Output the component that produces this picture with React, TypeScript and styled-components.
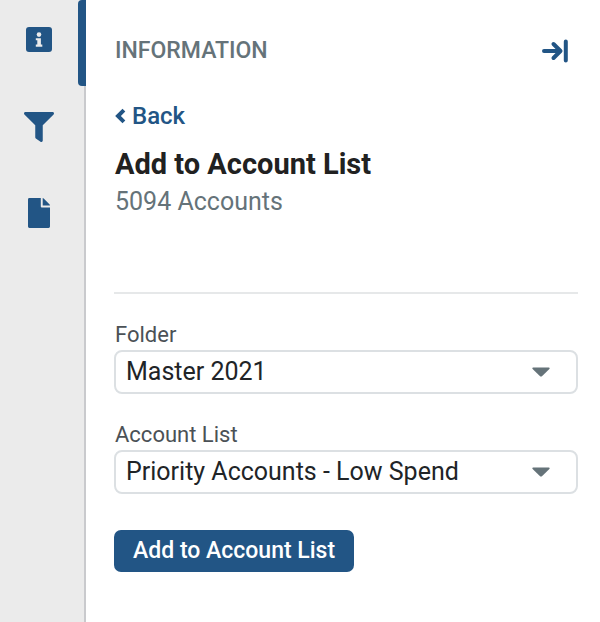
import React, { useState } from "react";
import styled, { createGlobalStyle } from "styled-components";

const blue = "#225585";
const slate = "#657379";

const GlobalStyle = createGlobalStyle`
  *, *::before, *::after { box-sizing: border-box; }
  body {
    margin: 0;
    background: #fff;
    color: #212427;
    font-family: Roboto, "Liberation Sans", sans-serif;
  }
  button, select { font: inherit; }
`;

const Page = styled.div`
  display: flex;
  min-height: 100vh;
`;

const Sidebar = styled.nav`
  display: flex;
  flex: 0 0 86px;
  flex-direction: column;
  gap: 6px;
  background: #ebebeb;
  border-right: 2px solid #c9cacd;
`;

const TabButton = styled.button<{ $active: boolean }>`
  position: relative;
  display: flex;
  align-items: center;
  justify-content: center;
  height: 80px;
  padding: 2px 6px 0 0;
  border: 0;
  background: none;
  color: ${blue};
  cursor: pointer;

  &::after {
    content: "";
    display: ${({ $active }) => ($active ? "block" : "none")};
    position: absolute;
    top: 0;
    right: -2px;
    width: 8px;
    height: 86px;
    border-radius: 4px 0 0 4px;
    background: ${blue};
  }
`;

const Panel = styled.main`
  flex: 1;
  min-width: 0;
  padding: 35px 22px 34px 28px;
`;

const PanelHeader = styled.header`
  display: flex;
  align-items: center;
  justify-content: space-between;
  height: 32px;
  padding: 0 10px 0 1px;
`;

const PanelTitle = styled.h2`
  margin: 0;
  color: ${slate};
  font-size: 23px;
  font-weight: 500;
  line-height: 32px;
`;

const CollapseButton = styled.button`
  display: flex;
  padding: 0;
  border: 0;
  background: none;
  color: ${blue};
  cursor: pointer;
`;

const BackLink = styled.a`
  display: inline-flex;
  align-items: center;
  gap: 6px;
  margin: 33px 0 0 1px;
  color: ${blue};
  font-size: 24px;
  font-weight: 500;
  line-height: 32px;
  text-decoration: none;
`;

const Summary = styled.section`
  height: 162px;
  padding: 14px 1px 0;
  border-bottom: 2px solid #e6e8e9;
`;

const Heading = styled.h1`
  margin: 0;
  color: #212121;
  font-size: 29px;
  font-weight: 700;
  line-height: 36px;
`;

const Count = styled.p`
  margin: 2px 0 0;
  color: ${slate};
  font-size: 25px;
  line-height: 36px;
`;

const Form = styled.form`
  display: flex;
  flex-direction: column;
  gap: 28px;
  padding-top: 27px;
`;

const Field = styled.div`
  display: flex;
  flex-direction: column;
  gap: 1px;

  & + & { margin-top: -1px; }
`;

const Label = styled.label`
  padding-left: 1px;
  color: #4b5156;
  font-size: 22px;
  line-height: 28px;
`;

const SelectFrame = styled.div`
  display: grid;
  align-items: center;

  > * { grid-area: 1 / 1; }
`;

const Select = styled.select`
  width: 100%;
  height: 44px;
  padding: 0 60px 2px 10px;
  border: 2px solid #dce0e3;
  border-radius: 8px;
  background: #fff;
  color: #212427;
  font-size: 25px;
  appearance: none;
`;

const Caret = styled.svg`
  justify-self: end;
  margin-right: 28px;
  pointer-events: none;
`;

const SubmitButton = styled.button`
  align-self: flex-start;
  height: 42px;
  margin-top: 8px;
  padding: 0 19px 2px;
  border: 0;
  border-radius: 7px;
  background: ${blue};
  color: #fff;
  font-size: 23px;
  font-weight: 500;
  cursor: pointer;
`;

const InfoIcon = () => (
  <svg width="26" height="28" viewBox="0 0 26 28" aria-hidden="true">
    <rect width="26" height="25" rx="3" fill="currentColor" />
    <circle cx="13" cy="7.6" r="2.3" fill="#ebebeb" />
    <path d="M9.8 11.2h5.1v6.4h1.4v2.1H9.8v-2.1h1.5v-4.3H9.8z" fill="#ebebeb" />
  </svg>
);

const FilterIcon = () => (
  <svg width="30" height="30" viewBox="0 0 512 512" fill="currentColor" aria-hidden="true">
    <path d="M488 0H24C3 0-8 26 7 41l185 185v206c0 8 4 15 10 20l80 56c16 11 38 0 38-20V226L505 41c15-15 4-41-17-41z" />
  </svg>
);

const FileIcon = () => (
  <svg width="22" height="30" viewBox="0 0 22 30" fill="currentColor" aria-hidden="true">
    <path d="M1.4 0H12.8V8.4Q12.8 9.4 13.8 9.4H22V28.6Q22 30 20.6 30H1.4Q0 30 0 28.6V1.4Q0 0 1.4 0z" />
    <path d="M14.7 0.1Q15.3 0.2 15.7 0.6L21.4 6.3Q21.9 6.8 22 7.5H14.7z" />
  </svg>
);

const CollapseIcon = () => (
  <svg
    width="28"
    height="24"
    viewBox="0 0 28 24"
    fill="none"
    stroke="currentColor"
    strokeLinecap="round"
    strokeLinejoin="round"
    strokeWidth="4"
    aria-hidden="true"
  >
    <path d="M4 12H19M13.5 5L20.5 12L13.5 19M25.8 2.5V21.5" />
  </svg>
);

const ChevronIcon = () => (
  <svg
    width="11"
    height="16"
    viewBox="0 0 11 16"
    fill="none"
    stroke="currentColor"
    strokeWidth="4"
    aria-hidden="true"
  >
    <path d="M8.9 2.1L3 8L8.9 13.9" />
  </svg>
);

const tabs = [
  { name: "Information", Icon: InfoIcon },
  { name: "Filter", Icon: FilterIcon },
  { name: "Document", Icon: FileIcon },
];

type SelectFieldProps = { id: string; label: string; options: string[] };

const SelectField = ({ id, label, options }: SelectFieldProps) => (
  <Field>
    <Label htmlFor={id}>{label}</Label>
    <SelectFrame>
      <Select id={id} name={id}>
        {options.map((option) => (
          <option key={option}>{option}</option>
        ))}
      </Select>
      <Caret width="18" height="10" viewBox="0 0 18 10" aria-hidden="true">
        <path d="M1.2 0.5H16.8Q18.2 0.7 17.4 1.9L10.2 9Q9 10 7.8 9L0.6 1.9Q-0.2 0.7 1.2 0.5z" fill={slate} />
      </Caret>
    </SelectFrame>
  </Field>
);

export default function App() {
  const [active, setActive] = useState("Information");

  return (
    <>
      <GlobalStyle />
      <Page>
        <Sidebar aria-label="Panels">
          {tabs.map(({ name, Icon }) => (
            <TabButton
              key={name}
              type="button"
              aria-label={name}
              aria-pressed={active === name}
              $active={active === name}
              onClick={() => setActive(name)}
            >
              <Icon />
            </TabButton>
          ))}
        </Sidebar>
        <Panel>
          <PanelHeader>
            <PanelTitle>INFORMATION</PanelTitle>
            <CollapseButton type="button" aria-label="Collapse panel">
              <CollapseIcon />
            </CollapseButton>
          </PanelHeader>
          <BackLink href="#back">
            <ChevronIcon />
            Back
          </BackLink>
          <Summary>
            <Heading>Add to Account List</Heading>
            <Count>5094 Accounts</Count>
          </Summary>
          <Form onSubmit={(event) => event.preventDefault()}>
            <SelectField id="folder" label="Folder" options={["Master 2021"]} />
            <SelectField id="account-list" label="Account List" options={["Priority Accounts - Low Spend"]} />
            <SubmitButton type="submit">Add to Account List</SubmitButton>
          </Form>
        </Panel>
      </Page>
    </>
  );
}
